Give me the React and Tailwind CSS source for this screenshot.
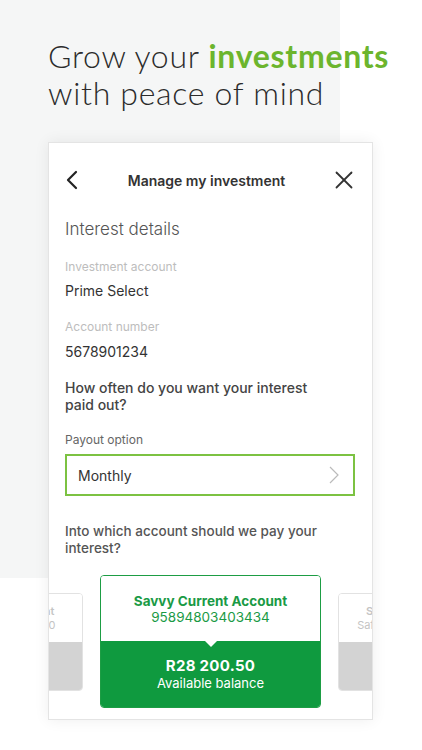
import React from 'react';

// Small account tile shown left/right of the selected one
const SideAccount = ({ title, sub }) => (
    <div className="w-[163px] h-[98px] shrink-0 rounded-[4px] border border-[#e2e2e2] overflow-hidden flex flex-col">
        <div className="h-[48px] bg-white flex flex-col items-center justify-center text-[11px] leading-[14px] text-[#c4c4c4] whitespace-nowrap">
            <div className="font-semibold">{title}</div>
            <div>{sub}</div>
        </div>
        <div className="flex-1 bg-[#d3d3d3]" />
    </div>
);

const App = () => (
    <div className="w-[422px] h-[750px] bg-white bg-[linear-gradient(#f5f6f6,#f5f6f6)] bg-no-repeat bg-[length:340px_578px] pt-[37px] px-[48px] overflow-hidden">
        <h1 className="text-[32px] leading-[37px] text-[#2b2b2b] font-light tracking-[0.7px] whitespace-nowrap" style={{ fontFamily: 'Lato, sans-serif' }}>
            Grow your <span className="font-bold text-[#6cb52d]">investments</span>
            <br />
            with peace of mind
        </h1>

        <section
            className="mt-[31px] w-[325px] h-[578px] bg-white border border-[#e4e4e4] shadow-[0_0_14px_rgba(0,0,0,0.07)] overflow-hidden"
            style={{ fontFamily: 'Inter, Roboto, sans-serif' }}
        >
            <header className="h-[74px] flex items-center justify-between pl-[17px] pr-[19px]">
                <svg width="12" height="20" viewBox="0 0 12 20" fill="none" stroke="#222" strokeWidth="2.2" strokeLinecap="round" strokeLinejoin="round">
                    <polyline points="10,2 2,10 10,18" />
                </svg>
                <h2 className="text-[14px] font-semibold text-[#333]">Manage my investment</h2>
                <svg width="18" height="18" viewBox="0 0 18 18" fill="none" stroke="#333" strokeWidth="1.8" strokeLinecap="round">
                    <line x1="1.5" y1="1.5" x2="16.5" y2="16.5" />
                    <line x1="16.5" y1="1.5" x2="1.5" y2="16.5" />
                </svg>
            </header>

            <div className="pl-[16px] pr-[17px]">
                <div className="text-[17px] leading-[24px] font-light text-[#555]">Interest details</div>

                <div className="mt-[18px] text-[12px] leading-[16px] text-[#bdbdbd]">Investment account</div>
                <div className="mt-[6px] text-[14px] leading-[20px] text-[#333]">Prime Select</div>

                <div className="mt-[18px] text-[12px] leading-[16px] text-[#bdbdbd]">Account number</div>
                <div className="mt-[7px] text-[14px] leading-[20px] text-[#333]">5678901234</div>

                <div className="mt-[17px] text-[14px] leading-[17px] font-medium text-[#444]">
                    How often do you want your interest
                    <br />
                    paid out?
                </div>

                <div className="mt-[19px] text-[12px] leading-[16px] text-[#666]">Payout option</div>
                <button className="mt-[6px] w-full h-[42px] border-2 border-[#7cc242] flex items-center justify-between pl-[11px] pr-[14px] text-[14px] text-[#333]">
                    <span>Monthly</span>
                    <svg width="10" height="18" viewBox="0 0 10 18" fill="none" stroke="#bbb" strokeWidth="1.2">
                        <polyline points="1,1 9,9 1,17" />
                    </svg>
                </button>

                <div className="mt-[27px] text-[13.5px] leading-[17px] font-medium text-[#555]">
                    Into which account should we pay your
                    <br />
                    interest?
                </div>
            </div>

            <div className="mt-[18px] flex justify-center items-center gap-[17px]">
                <SideAccount title="Savvy Plus Account" sub="Available R10 250.00" />
                <div className="w-[221px] h-[133px] shrink-0 rounded-[4px] border border-[#1d9d44] overflow-hidden flex flex-col">
                    <div className="h-[65px] bg-white flex flex-col items-center justify-center text-[#1a9a45] text-[13.5px] leading-[16px]">
                        <div className="font-bold">Savvy Current Account</div>
                        <div>95894803403434</div>
                    </div>
                    <div className="relative flex-1 bg-[#0f9a3f] flex flex-col items-center justify-center text-white">
                        <div className="absolute top-0 left-1/2 -translate-x-1/2 w-0 h-0 border-l-[6px] border-r-[6px] border-t-[6px] border-l-transparent border-r-transparent border-t-white" />
                        <div className="text-[15px] leading-[18px] font-bold tracking-[0.3px]">R28 200.50</div>
                        <div className="text-[13px] leading-[16px]">Available balance</div>
                    </div>
                </div>
                <SideAccount title="Straight Up Account" sub="Safe Saver 8923410222" />
            </div>
        </section>
    </div>
);

export default App;
